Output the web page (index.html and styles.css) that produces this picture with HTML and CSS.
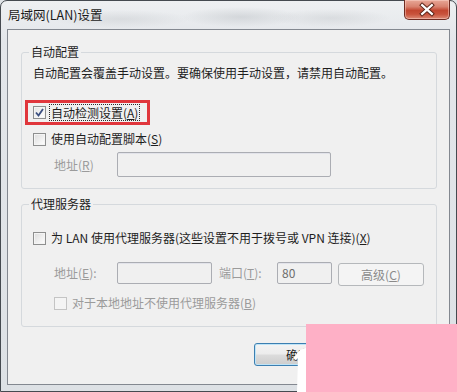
FILE: index.html
```html
<!DOCTYPE html>
<html lang="zh-CN">
<head>
<meta charset="utf-8">
<title>局域网(LAN)设置</title>
<link rel="stylesheet" href="styles.css">
</head>
<body>
<div class="screen">
  <div class="window">
    <div class="titlebar">
      <span class="title">局域网(LAN)设置</span>
      <span class="close">
        <svg width="45" height="19" viewBox="0 0 45 19">
          <path d="M17.5 5 L27.5 14 M27.5 5 L17.5 14" stroke="#5a2418" stroke-width="4.2" stroke-linecap="square"/>
          <path d="M17.5 5 L27.5 14 M27.5 5 L17.5 14" stroke="#ffffff" stroke-width="2.2" stroke-linecap="square"/>
        </svg>
      </span>
    </div>
    <div class="client">
      <fieldset class="group g1">
        <legend>自动配置</legend>
        <p class="desc">自动配置会覆盖手动设置。要确保使用手动设置，请禁用自动配置。</p>
        <div class="highlight">
          <span class="check">
            <span class="box checked">
              <svg width="9" height="9" viewBox="0 0 9 9"><path d="M1 4.5 L3.5 7.5 L8 1" fill="none" stroke="#3b4f80" stroke-width="1.8"/></svg>
            </span>
            <span class="focus">自动检测设置(<u>A</u>)</span>
          </span>
        </div>
        <span class="check row-script">
          <span class="box"></span>
          <span class="text">使用自动配置脚本(<u>S</u>)</span>
        </span>
        <div class="addr-row">
          <span class="lbl dis">地址(<u>R</u>)</span>
          <span class="textbox wide"></span>
        </div>
      </fieldset>

      <fieldset class="group g2">
        <legend>代理服务器</legend>
        <span class="check row-proxy">
          <span class="box"></span>
          <span class="text">为 LAN 使用代理服务器(这些设置不用于拨号或 VPN 连接)(<u>X</u>)</span>
        </span>
        <div class="proxy-row">
          <span class="lbl dis">地址(<u>E</u>):</span>
          <span class="textbox addr"></span>
          <span class="lbl dis port-lbl">端口(<u>T</u>):</span>
          <span class="textbox port">80</span>
          <span class="btn dis-btn">高级(<u>C</u>)</span>
        </div>
        <span class="check row-local">
          <span class="box disabled"></span>
          <span class="text dis">对于本地地址不使用代理服务器(<u>B</u>)</span>
        </span>
      </fieldset>

      <div class="buttons">
        <span class="btn default">确定</span>
        <span class="btn">取消</span>
      </div>
    </div>
  </div>
  <div class="mark"></div>
  <svg class="wm" width="20" height="47" viewBox="0 0 20 47">
    <path d="M18 3 L12 5 L5 13 L8 15 L10 13 L9 47 L18 47 Z" fill="#ffffff"/>
  </svg>
</div>
</body>
</html>
```
FILE: styles.css
```css
* { box-sizing: border-box; }
html, body { margin: 0; padding: 0; }
body {
  width: 457px;
  height: 392px;
  overflow: hidden;
  background: #dfe3e7;
  font-family: "Noto Sans CJK SC", "Microsoft YaHei", sans-serif;
  font-size: 12px;
  color: #1e1e1e;
}
.screen {
  position: relative;
  width: 457px;
  height: 392px;
}
.window {
  width: 457px;
  height: 392px;
  border: 1px solid #454a50;
  border-radius: 7px 7px 0 0;
  padding: 0 6px 6px 6px;
  display: flex;
  flex-direction: column;
  background:
    radial-gradient(ellipse 60px 10px at 240px 16px, rgba(170,175,180,0.35), rgba(170,175,180,0)),
    radial-gradient(ellipse 70px 9px at 120px 18px, rgba(180,184,188,0.3), rgba(180,184,188,0)),
    radial-gradient(ellipse 60px 9px at 330px 17px, rgba(180,184,188,0.3), rgba(180,184,188,0)),
    linear-gradient(#eef0f2, #e3e6ea 40px, #dde1e5);
}
.titlebar {
  height: 28px;
  display: flex;
  justify-content: space-between;
  align-items: flex-start;
  flex: none;
}
.title {
  margin-top: 5px;
  margin-left: 1px;
  line-height: 18px;
  font-size: 12.5px;
  color: #1a1a1a;
}
.close {
  width: 46px;
  height: 20px;
  margin-top: -1px;
  margin-right: 0px;
  border: 1px solid #6e2b22;
  border-top: none;
  border-radius: 0 0 5px 5px;
  background: linear-gradient(#e8a797 0%, #d8826f 35%, #c24630 55%, #c9533c 75%, #dd8b77 100%);
  box-shadow: inset 0 0 0 1px rgba(255,220,210,0.45);
  display: flex;
  align-items: center;
  justify-content: center;
}
.close svg { display: block; }

.client {
  flex: 1;
  border: 1px solid #838890;
  background: #f0f0f0;
  display: flex;
  flex-direction: column;
}

.group {
  margin: 0 0 0 13px;
  width: 416px;
  border: 1px solid #d5d9dd;
  border-radius: 3px;
  padding: 0 0 0 11px;
  display: flex;
  flex-direction: column;
  align-items: flex-start;
  min-width: 0;
}
.group legend {
  margin-left: -4px;
  padding: 0 2px;
  line-height: 16px;
  height: 16px;
  color: #1e1e1e;
}
.g1 { margin-top: 14px; padding-bottom: 11px; }
.g2 { margin-top: 7px; padding-bottom: 15px; }

.desc {
  margin: 5px 0 0 0;
  line-height: 16px;
  white-space: nowrap;
}

.highlight {
  margin: 19px 0 0 -8px;
  border: 3px solid #e0363c;
  padding: 0 7px 0 5px;
  height: 25px;
  display: flex;
  align-items: center;
}

.check {
  display: flex;
  align-items: center;
  line-height: 16px;
  height: 16px;
  white-space: nowrap;
}
.box {
  width: 13px;
  height: 13px;
  flex: none;
  border: 1px solid #8e8f8f;
  background: linear-gradient(135deg, #dcdcdc, #ffffff);
  box-shadow: inset 0 0 0 1px #f4f4f4;
  display: flex;
  align-items: center;
  justify-content: center;
}
.box.checked { background: linear-gradient(135deg, #e4e4e4, #ffffff); }
.box svg { display: block; }
.box.disabled {
  border-color: #c4c4c4;
  background: #f4f4f4;
  box-shadow: none;
}
.check .text { margin-left: 5px; }
.focus {
  margin-left: 3px;
  padding: 0 1px;
  border: 1px dotted #2a2a2a;
  line-height: 15px;
}
u { text-underline-offset: 1px; }

.row-script { margin-top: 6px; }

.addr-row {
  margin: 5px 0 0 21px;
  display: flex;
  align-items: center;
  height: 25px;
}
.lbl { line-height: 16px; white-space: nowrap; }
.dis { color: #9b9b9b; }
.addr-row .lbl { width: 63px; }
.textbox {
  border: 1px solid #abadb3;
  border-radius: 2px;
  background: #f0f0f0;
  box-shadow: inset 0 1px 0 #e2e3ea;
}
.textbox.wide { width: 214px; height: 25px; }

.row-proxy { margin-top: 18px; }

.proxy-row {
  margin: 16px 0 0 21px;
  height: 24px;
  display: flex;
  align-items: flex-start;
}
.proxy-row .lbl { margin-top: 3px; }
.proxy-row > .lbl:first-child { width: 63px; }
.textbox.addr { width: 95px; height: 22px; }
.port-lbl { margin-left: 7px; width: 58px; }
.textbox.port {
  width: 55px;
  height: 22px;
  padding-left: 4px;
  line-height: 20px;
  color: #6d6d6d;
}
.btn {
  display: flex;
  align-items: center;
  justify-content: center;
  border: 1px solid #707070;
  border-radius: 3px;
  background: linear-gradient(#f2f2f2 0%, #ebebeb 48%, #dddddd 52%, #cfcfcf 100%);
  height: 23px;
  line-height: 16px;
}
.dis-btn {
  margin-left: 6px;
  margin-top: 1px;
  width: 86px;
  border-color: #b5b8bb;
  background: #f4f4f4;
  color: #8a8a8a;
}
.row-local { margin: 9px 0 0 21px; }

.buttons {
  margin: 16px 12px 0 0;
  display: flex;
  justify-content: flex-end;
  gap: 7px;
}
.buttons .btn { width: 88px; }
.btn.default {
  border-color: #3c7fb1;
  box-shadow: inset 0 0 0 1px #bfe4f7;
  background: linear-gradient(#f4f4f4 0%, #ececec 48%, #dcdcdc 52%, #cdcdcd 100%);
}

.mark {
  position: absolute;
  left: 306px;
  top: 324px;
  width: 151px;
  height: 68px;
  background: #feb0c6;
}
.wm {
  position: absolute;
  left: 288px;
  top: 345px;
  display: block;
}
```
